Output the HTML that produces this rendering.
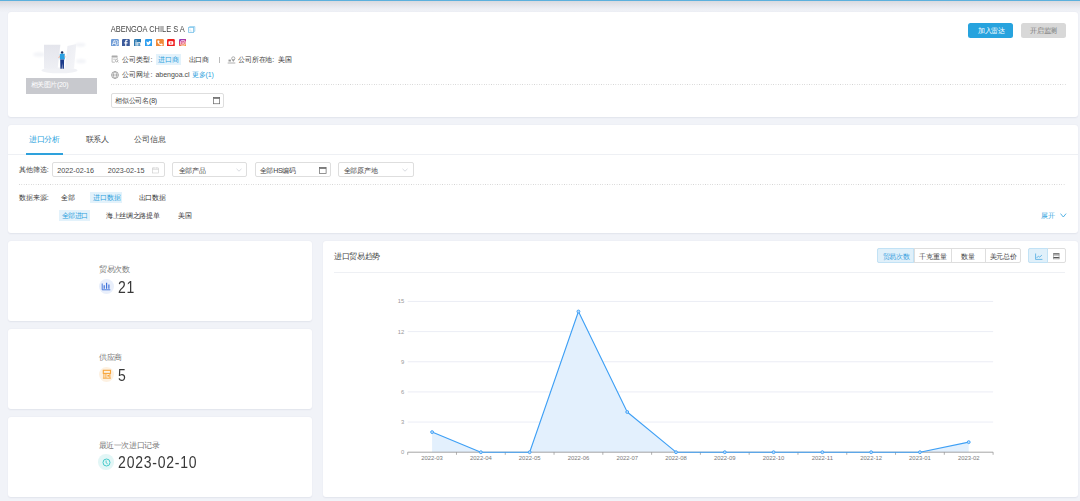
<!DOCTYPE html>
<html><head><meta charset="utf-8">
<style>
*{box-sizing:border-box;margin:0;padding:0}
html,body{width:1080px;height:501px;overflow:hidden;background:#f1f3f8;font-family:"Liberation Sans",sans-serif;color:#333}
.abs{position:absolute}
.t{position:absolute;white-space:nowrap;line-height:1}
.card{position:absolute;background:#fff;border-radius:3px;box-shadow:0 0.5px 1.5px rgba(30,40,80,.07)}
.tag{position:absolute;background:#e3f2fb}
.box{position:absolute;border:0.75px solid #dedede;border-radius:2px;background:#fff}
.dots{position:absolute;height:1px;background-image:linear-gradient(90deg,#d2d2d2 45%,transparent 45%);background-size:2.4px 1px}
</style></head><body>
<div class="abs" style="left:0;top:0;width:1080px;height:1px;background:#5cb0dd"></div>
<div class="abs" style="left:0;top:1px;width:1080px;height:11px;background:linear-gradient(#d9dae0,#eceef4 70%,#f0f2f7)"></div>
<div class="card" style="left:8px;top:12px;width:1069.5px;height:105px"></div>
<svg class="abs" style="left:20px;top:30px" width="90" height="50" viewBox="20 30 90 50">
  <defs>
    <linearGradient id="g1" x1="0" y1="0" x2="0" y2="1"><stop offset="0" stop-color="#e4e5ec"/><stop offset="1" stop-color="#eeeff4"/></linearGradient>
    <linearGradient id="g2" x1="0" y1="0" x2="1" y2="1"><stop offset="0" stop-color="#ebecf2"/><stop offset="1" stop-color="#f4f5f8"/></linearGradient>
    <filter id="bl" x="-50%" y="-50%" width="200%" height="200%"><feGaussianBlur stdDeviation="0.8"/></filter>
  </defs>
  <ellipse cx="59.5" cy="70.4" rx="18" ry="2.9" fill="#f0f1f5"/>
  <ellipse cx="39" cy="54.5" rx="6" ry="2.2" fill="#f3f4f8" filter="url(#bl)"/>
  <ellipse cx="80.5" cy="44.8" rx="5" ry="2" fill="#f3f4f8" filter="url(#bl)"/>
  <ellipse cx="81" cy="61.2" rx="5" ry="2.2" fill="#f3f4f8" filter="url(#bl)"/>
  <path d="M44 44.8H60.4L57.6 68.8H44Z" fill="url(#g1)"/>
  <path d="M67.5 46L76.3 44L74 68.8H64.8Z" fill="url(#g2)"/>
  <circle cx="62.1" cy="52.5" r="1.25" fill="#1c2b58"/>
  <path d="M59.8 53.8h5v5.8h-5z" fill="#2aa0e2"/>
  <path d="M60.2 59.5h3.9l-0.2 9.2h-1.4l-0.3-5.8-0.4 5.8h-1.4z" fill="#1b3a8a"/>
  <path d="M58 58.2l1.9-3.2v2.6z" fill="#f0b49c"/><path d="M65.8 57.6l-1.1-3v2.6z" fill="#f0b49c"/>
</svg>
<div class="abs" style="left:26.3px;top:77.9px;width:70.5px;height:15.9px;background:#c8c9ce"></div>
<div class="t" style="left:30.5px;top:81.2px;font-size:7px;letter-spacing:-0.35px;color:#fff;">相关图片(20)</div>
<div class="t" style="left:110.8px;top:25.3px;font-size:7.45px;color:#454545;transform:scaleY(1.12);transform-origin:0 0">ABENGOA CHILE S A</div>
<svg class="abs" style="left:187.8px;top:25.6px" width="8" height="7" viewBox="0 0 8 7"><path d="M1.6 1.2V0.6h5.2v4.8H6.1" fill="none" stroke="#86c8ec" stroke-width="0.8"/><rect x="0.6" y="1.4" width="5" height="5" fill="#fff" stroke="#7ec4ea" stroke-width="0.85"/><path d="M2 2.6v2.5h2.3" fill="none" stroke="#b5dcf3" stroke-width="0.6"/></svg>
<svg class="abs" style="left:110.9px;top:38.6px" width="7.8" height="7.8" viewBox="0 0 7.8 7.8"><rect width="7.8" height="7.8" rx="1.2" fill="#6e9bd6"/><path d="M1.3 6.2L3 1.6h.6l1.6 4.6M2 4.5h2.4" fill="none" stroke="#fff" stroke-width="0.75"/><path d="M4.6 1.6h1c.8 0 1.1.4 1.1 1 0 .5-.3.8-.8.9.6.1 1 .5 1 1.1 0 .8-.5 1.6-1.3 1.6h-1" fill="none" stroke="#fff" stroke-width="0.7"/></svg>
<svg class="abs" style="left:122.0px;top:38.6px" width="7.8" height="7.8" viewBox="0 0 7.8 7.8"><rect width="7.8" height="7.8" rx="1.2" fill="#3b5a9a"/><path d="M4.4 7.8V4.4h1.1l.2-1.2H4.4v-.8c0-.4.1-.6.6-.6h.7V.7H4.8c-1.2 0-1.6.6-1.6 1.6v.9H2.3v1.2h.9v3.4z" fill="#fff"/></svg>
<svg class="abs" style="left:133.5px;top:38.6px" width="7.8" height="7.8" viewBox="0 0 7.8 7.8"><rect width="7.8" height="7.8" rx="1.2" fill="#2b78b0"/><path d="M1.5 3h1.1v3.7H1.5zM2.05 1.3a.62.62 0 110 1.24.62.62 0 010-1.24zM3.3 3h1.05v.5c.2-.35.6-.6 1.2-.6 1.1 0 1.35.7 1.35 1.65v2.15H5.75V4.8c0-.5-.05-.95-.6-.95-.6 0-.75.4-.75.95v1.9H3.3z" fill="#fff"/></svg>
<svg class="abs" style="left:144.70000000000002px;top:38.6px" width="7.8" height="7.8" viewBox="0 0 7.8 7.8"><rect width="7.8" height="7.8" rx="1.2" fill="#2d9ff0"/><path d="M6.5 2.6c-.2.1-.4.1-.6.2.2-.1.4-.3.5-.6-.2.1-.4.2-.7.2a1 1 0 00-1.8.9C2.9 3.3 2.1 2.9 1.6 2.2c-.3.5-.1 1.1.3 1.4-.2 0-.3 0-.5-.1 0 .5.4.9.8 1h-.5c.1.4.5.7 1 .7-.5.4-1.1.6-1.7.5.5.3 1 .5 1.6.5 2 0 3.1-1.7 3.1-3.1v-.1c.3-.2.5-.4.7-.6z" fill="#fff"/></svg>
<svg class="abs" style="left:155.8px;top:38.6px" width="7.8" height="7.8" viewBox="0 0 7.8 7.8"><rect width="7.8" height="7.8" rx="1.2" fill="#f18a39"/><path d="M2.1 1.4h.9l.6 1.4-.7.6c.3.8.9 1.4 1.7 1.7l.6-.7 1.4.6v.9c0 .3-.3.6-.6.6C3.7 6.5 1.2 4 1.4 2c0-.3.3-.6.7-.6z" fill="#fff"/></svg>
<svg class="abs" style="left:167.3px;top:38.6px" width="7.8" height="7.8" viewBox="0 0 7.8 7.8"><rect width="7.8" height="7.8" rx="1.2" fill="#f01e1e"/><rect x="1.5" y="2.3" width="4.8" height="3.4" rx="0.6" fill="#fff"/><path d="M3.4 3.1l1.6 0.9-1.6 0.9z" fill="#f01e1e"/></svg>
<svg class="abs" style="left:178.5px;top:38.6px" width="7.8" height="7.8" viewBox="0 0 7.8 7.8"><defs><linearGradient id="ig" x1="0" y1="0" x2="0.3" y2="1"><stop offset="0" stop-color="#7a3fd0"/><stop offset="0.55" stop-color="#e2306c"/><stop offset="1" stop-color="#f9a03a"/></linearGradient></defs><rect width="7.8" height="7.8" rx="1.2" fill="url(#ig)"/><rect x="1.6" y="1.6" width="4.6" height="4.6" rx="1.3" fill="none" stroke="#fff" stroke-width="0.75"/><circle cx="3.9" cy="3.9" r="1.05" fill="none" stroke="#fff" stroke-width="0.7"/><circle cx="5.3" cy="2.5" r="0.35" fill="#fff"/></svg>
<svg class="abs" style="left:111px;top:55.3px" width="8" height="8" viewBox="0 0 8 8"><rect x="0.6" y="0.5" width="6" height="1.9" rx="0.4" fill="#aaa"/><path d="M1.1 2.6v4.6h2.8M6.2 2.6v1.4" fill="none" stroke="#aaa" stroke-width="0.75"/><path d="M2.2 4.2h2.4" stroke="#aaa" stroke-width="0.7"/><circle cx="5.6" cy="5.7" r="1.2" fill="none" stroke="#999" stroke-width="0.75"/><path d="M6.5 6.6l.8.8" stroke="#999" stroke-width="0.7"/></svg>
<div class="t" style="left:122.4px;top:56.0px;font-size:7px;color:#3c3c3c;">公司类型:</div>
<div class="tag" style="left:155.5px;top:54px;width:25.4px;height:11.1px"></div>
<div class="t" style="left:158.2px;top:56.0px;font-size:7px;letter-spacing:-0.2px;color:#2b9fdd;">进口商</div>
<div class="t" style="left:188.6px;top:56.0px;font-size:7px;letter-spacing:-0.45px;color:#3c3c3c;">出口商</div>
<div class="abs" style="left:218.5px;top:56.5px;width:1.1px;height:6px;background:#bbb"></div>
<svg class="abs" style="left:226.5px;top:55.5px" width="9" height="8" viewBox="0 0 9 8"><circle cx="6.3" cy="2.4" r="1.6" fill="none" stroke="#999" stroke-width="0.8"/><path d="M5.1 3.5L6.3 5.5 7.5 3.5" fill="#999" stroke="#999" stroke-width="0.5"/><rect x="1.5" y="3.6" width="2.4" height="1.9" fill="#999"/><path d="M0.7 7h7.6" stroke="#999" stroke-width="0.8"/></svg>
<div class="t" style="left:238.2px;top:56.0px;font-size:7px;letter-spacing:-0.2px;color:#3c3c3c;">公司所在地:</div>
<div class="t" style="left:277.8px;top:56.0px;font-size:7px;color:#333;">美国</div>
<svg class="abs" style="left:111px;top:71px" width="8" height="8" viewBox="0 0 8 8"><circle cx="4" cy="4" r="3.4" fill="none" stroke="#888" stroke-width="0.75"/><ellipse cx="4" cy="4" rx="1.5" ry="3.4" fill="none" stroke="#888" stroke-width="0.6"/><path d="M0.8 4h6.4" stroke="#888" stroke-width="0.6"/></svg>
<div class="t" style="left:122.4px;top:71.0px;font-size:7px;color:#3c3c3c;">公司网址:</div>
<div class="t" style="left:155.4px;top:71.0px;font-size:7.0px;color:#4a4a4a;">abengoa.cl</div>
<div class="t" style="left:191.8px;top:71.0px;font-size:7px;letter-spacing:-0.15px;color:#2b9fdd;">更多(1)</div>
<div class="dots" style="left:111px;top:84px;width:955px"></div>
<div class="box" style="left:111.4px;top:93.3px;width:112.2px;height:14.3px"></div>
<div class="t" style="left:115.0px;top:96.6px;font-size:7px;letter-spacing:-0.2px;color:#444;">相似公司名(8)</div>
<svg class="abs" style="left:213px;top:96.7px" width="8" height="8" viewBox="0 0 8 8"><rect x="0.45" y="0.45" width="6.2" height="6.3" fill="none" stroke="#666" stroke-width="0.7"/><rect x="0.45" y="0.45" width="6.2" height="1.3" fill="#666"/></svg>
<div class="abs" style="left:968.3px;top:23px;width:45px;height:15.3px;background:#27a3de;border-radius:2.5px"></div>
<div class="t" style="left:977.8px;top:27.0px;font-size:7px;letter-spacing:-0.25px;color:#fff;">加入雷达</div>
<div class="abs" style="left:1021.1px;top:23px;width:45px;height:15.3px;background:#d8d8d8;border-radius:2.5px"></div>
<div class="t" style="left:1030.1px;top:27.0px;font-size:7px;letter-spacing:-0.25px;color:#777;">开启监测</div>
<div class="card" style="left:8px;top:125px;width:1069.5px;height:108px"></div>
<div class="t" style="left:28.9px;top:136.2px;font-size:8px;letter-spacing:-0.2px;color:#2b9fdd;">进口分析</div>
<div class="t" style="left:85.6px;top:136.2px;font-size:8px;letter-spacing:-0.2px;color:#444;">联系人</div>
<div class="t" style="left:134.4px;top:136.2px;font-size:8px;letter-spacing:-0.2px;color:#444;">公司信息</div>
<div class="abs" style="left:8px;top:153.8px;width:1069.5px;height:0.8px;background:#eef0f4"></div>
<div class="abs" style="left:25.7px;top:153px;width:37.8px;height:2px;background:#2ea1dc"></div>
<div class="t" style="left:18.8px;top:166.0px;font-size:7px;color:#3c3c3c;">其他筛选:</div>
<div class="box" style="left:52.2px;top:162.3px;width:112.6px;height:15.2px"></div>
<div class="t" style="left:57.3px;top:166.7px;font-size:7.2px;color:#4a4a4a;">2022-02-16</div>
<div class="t" style="left:107.7px;top:166.7px;font-size:7.2px;color:#4a4a4a;">2023-02-15</div>
<svg class="abs" style="left:152.4px;top:166.6px" width="7" height="7" viewBox="0 0 7 7"><rect x="0.4" y="1" width="6" height="5" fill="none" stroke="#cbcbcb" stroke-width="0.6"/><path d="M0.4 2.4h6M1.9 0.2v1.4M4.9 0.2v1.4" stroke="#cbcbcb" stroke-width="0.6"/></svg>
<div class="box" style="left:172.3px;top:162.3px;width:75.2px;height:15.2px"></div>
<div class="t" style="left:178.7px;top:166.6px;font-size:7px;letter-spacing:-0.3px;color:#444;">全部产品</div>
<svg class="abs" style="left:236.2px;top:168px" width="6" height="4" viewBox="0 0 6 4"><path d="M0.5 0.8L3 3.2 5.5 0.8" fill="none" stroke="#c0c4cc" stroke-width="0.6"/></svg>
<div class="box" style="left:255.4px;top:162.3px;width:75.3px;height:15.2px"></div>
<div class="t" style="left:259.8px;top:166.6px;font-size:7px;letter-spacing:-0.3px;color:#444;">全部HS编码</div>
<svg class="abs" style="left:318.9px;top:166.6px" width="8" height="7" viewBox="0 0 8 7"><rect x="0.5" y="0.5" width="6.6" height="6" fill="none" stroke="#666" stroke-width="0.7"/><rect x="0.5" y="0.5" width="6.6" height="1.3" fill="#666"/></svg>
<div class="box" style="left:338.4px;top:162.3px;width:75.3px;height:15.2px"></div>
<div class="t" style="left:343.8px;top:166.6px;font-size:7px;letter-spacing:-0.3px;color:#444;">全部原产地</div>
<svg class="abs" style="left:401.6px;top:168px" width="6" height="4" viewBox="0 0 6 4"><path d="M0.5 0.8L3 3.2 5.5 0.8" fill="none" stroke="#c0c4cc" stroke-width="0.6"/></svg>
<div class="dots" style="left:18.8px;top:184px;width:1047px"></div>
<div class="t" style="left:18.8px;top:194.3px;font-size:7px;color:#3c3c3c;">数据来源:</div>
<div class="t" style="left:60.8px;top:194.3px;font-size:7px;color:#333;">全部</div>
<div class="tag" style="left:90.2px;top:192px;width:31.8px;height:10.6px"></div>
<div class="t" style="left:93.1px;top:194.3px;font-size:7px;letter-spacing:-0.15px;color:#2b9fdd;">进口数据</div>
<div class="t" style="left:138.6px;top:194.3px;font-size:7px;letter-spacing:-0.25px;color:#333;">出口数据</div>
<div class="tag" style="left:58.5px;top:210px;width:31.5px;height:10.6px"></div>
<div class="t" style="left:61.5px;top:212.4px;font-size:7px;letter-spacing:-0.35px;color:#2b9fdd;">全部进口</div>
<div class="t" style="left:106.2px;top:212.4px;font-size:7px;letter-spacing:-0.35px;color:#333;">海上丝绸之路提单</div>
<div class="t" style="left:178.1px;top:212.4px;font-size:7px;color:#333;">美国</div>
<div class="t" style="left:1041.2px;top:212.0px;font-size:7px;color:#2b9fdd;">展开</div>
<svg class="abs" style="left:1059.5px;top:212.8px" width="7" height="5" viewBox="0 0 7 5"><path d="M0.5 0.6L3.3 4 6.1 0.6" fill="none" stroke="#2b9fdd" stroke-width="0.8"/></svg>
<div class="card" style="left:8px;top:240.5px;width:304px;height:80px"></div>
<div class="card" style="left:8px;top:328.5px;width:304px;height:80px"></div>
<div class="card" style="left:8px;top:416.5px;width:304px;height:80px"></div>
<div class="t" style="left:98.8px;top:265.6px;font-size:8px;letter-spacing:-0.25px;color:#777;">贸易次数</div>
<div class="abs" style="left:98.5px;top:278.8px;width:15px;height:15px;border-radius:50%;background:#e9effb"></div>
<svg class="abs" style="left:101px;top:281.5px" width="10" height="9" viewBox="0 0 10 9"><path d="M1.2 1.5V7.8H9.3" fill="none" stroke="#3b6fd9" stroke-width="0.9"/><path d="M3.2 3.3v3.5M5.6 0.8v6M7.9 2.4v4.4" stroke="#3b6fd9" stroke-width="1.15"/></svg>
<div class="t" style="left:117.9px;top:279.0px;font-size:14px;letter-spacing:0.75px;color:#383838;transform:scaleY(1.13);transform-origin:0 0">21</div>
<div class="t" style="left:98.8px;top:354.4px;font-size:8px;letter-spacing:-0.25px;color:#777;">供应商</div>
<div class="abs" style="left:98.5px;top:366.5px;width:15px;height:15px;border-radius:50%;background:#fdf1e2"></div>
<svg class="abs" style="left:101.5px;top:369px" width="10" height="10" viewBox="0 0 10 10"><rect x="1.3" y="1.3" width="7.2" height="3.1" fill="none" stroke="#f7a53b" stroke-width="1.1"/><path d="M1.9 4.4V8.9M3.9 4.4V8.9M7.9 4.4V8.9M0.9 9.2H8.9" fill="none" stroke="#f7a53b" stroke-width="0.95"/><rect x="5.4" y="5.9" width="1.9" height="1.7" fill="#f7a53b"/></svg>
<div class="t" style="left:118.0px;top:367.0px;font-size:14px;color:#383838;transform:scaleY(1.13);transform-origin:0 0">5</div>
<div class="t" style="left:98.8px;top:441.6px;font-size:8px;letter-spacing:-0.45px;color:#777;">最近一次进口记录</div>
<div class="abs" style="left:98.3px;top:454.2px;width:15.5px;height:15.5px;border-radius:50%;background:#e2f6f6"></div>
<svg class="abs" style="left:101.6px;top:457.6px" width="9" height="9" viewBox="0 0 9 9"><circle cx="4.5" cy="4.5" r="3.5" fill="none" stroke="#3ec8c8" stroke-width="0.95"/><path d="M4.1 2.5v2.3l1.6 1.1" fill="none" stroke="#3ec8c8" stroke-width="0.9"/></svg>
<div class="t" style="left:118.1px;top:454.4px;font-size:14px;letter-spacing:0.75px;color:#383838;transform:scaleY(1.13);transform-origin:0 0">2023-02-10</div>
<div class="card" style="left:323px;top:240.5px;width:754.5px;height:256px"></div>
<div class="t" style="left:334.0px;top:253.0px;font-size:8px;letter-spacing:-0.35px;color:#444;">进口贸易趋势</div>
<div class="abs" style="left:333.9px;top:272px;width:731.6px;height:0.8px;background:#eef0f4"></div>
<div class="abs" style="left:877.4px;top:248.2px;width:143.4px;height:14.6px;border:0.75px solid #dedede;border-radius:2px;background:#fff"></div>
<div class="abs" style="left:877.4px;top:248.2px;width:36.8px;height:14.6px;border:0.75px solid #c2e2f5;border-radius:2px 0 0 2px;background:#e0f0fa"></div>
<div class="t" style="left:882.6px;top:253.2px;font-size:7px;letter-spacing:-0.25px;color:#3aa0de;">贸易次数</div>
<div class="abs" style="left:914.2px;top:248.2px;width:0.75px;height:14.6px;background:#dedede"></div>
<div class="t" style="left:919.25px;top:253.2px;font-size:7px;letter-spacing:-0.25px;color:#444;">千克重量</div>
<div class="abs" style="left:950.7px;top:248.2px;width:0.75px;height:14.6px;background:#dedede"></div>
<div class="t" style="left:961.3px;top:253.2px;font-size:7px;letter-spacing:-0.25px;color:#444;">数量</div>
<div class="abs" style="left:984.8px;top:248.2px;width:0.75px;height:14.6px;background:#dedede"></div>
<div class="t" style="left:989.6px;top:253.2px;font-size:7px;letter-spacing:-0.25px;color:#444;">美元总价</div>
<div class="abs" style="left:1028.4px;top:248.2px;width:37.3px;height:14.6px;border:0.75px solid #dedede;border-radius:2px;background:#fff"></div>
<div class="abs" style="left:1028.4px;top:248.2px;width:19.6px;height:14.6px;border:0.75px solid #c2e2f5;border-radius:2px 0 0 2px;background:#e0f0fa"></div>
<svg class="abs" style="left:1034.8px;top:253px" width="8" height="7" viewBox="0 0 8 7"><path d="M0.6 0.5v5.9h6.8" fill="none" stroke="#3aa0de" stroke-width="0.7"/><path d="M1.6 5l1.8-1.9 1.3 1 2.2-2" fill="none" stroke="#3aa0de" stroke-width="0.7"/></svg>
<svg class="abs" style="left:1053.2px;top:253px" width="7" height="7" viewBox="0 0 7 7"><path d="M0.2 0.9h6.2M0.2 4.6h6.2" stroke="#555" stroke-width="1.1"/><path d="M0.2 2.6h6.2M0.5 0.5v5.6M6.1 0.5v5.6M0.2 5.9h6.2" stroke="#888" stroke-width="0.55"/></svg>
<svg class="abs" style="left:323px;top:240px;font-family:'Liberation Sans',sans-serif" width="754" height="257" viewBox="323 240 754 257"><line x1="407.7" y1="422.05" x2="993.1" y2="422.05" stroke="#e6e9f2" stroke-width="0.8"/><line x1="407.7" y1="391.90" x2="993.1" y2="391.90" stroke="#e6e9f2" stroke-width="0.8"/><line x1="407.7" y1="361.75" x2="993.1" y2="361.75" stroke="#e6e9f2" stroke-width="0.8"/><line x1="407.7" y1="331.60" x2="993.1" y2="331.60" stroke="#e6e9f2" stroke-width="0.8"/><line x1="407.7" y1="301.45" x2="993.1" y2="301.45" stroke="#e6e9f2" stroke-width="0.8"/><text x="404.2" y="454.20" font-size="5.8" fill="#999" text-anchor="end">0</text><text x="404.2" y="424.05" font-size="5.8" fill="#999" text-anchor="end">3</text><text x="404.2" y="393.90" font-size="5.8" fill="#999" text-anchor="end">6</text><text x="404.2" y="363.75" font-size="5.8" fill="#999" text-anchor="end">9</text><text x="404.2" y="333.60" font-size="5.8" fill="#999" text-anchor="end">12</text><text x="404.2" y="303.45" font-size="5.8" fill="#999" text-anchor="end">15</text><path d="M432.09 452.20 L432.09 432.10 L480.88 452.20 L529.66 452.20 L578.44 311.50 L627.23 412.00 L676.01 452.20 L724.79 452.20 L773.58 452.20 L822.36 452.20 L871.14 452.20 L919.92 452.20 L968.71 442.15 L968.71 452.20 Z" fill="#e3f0fd"/><line x1="407.7" y1="452.2" x2="993.1" y2="452.2" stroke="#8e8e8e" stroke-width="0.8"/><line x1="407.70" y1="452.2" x2="407.70" y2="454.80" stroke="#8e8e8e" stroke-width="0.7"/><line x1="456.48" y1="452.2" x2="456.48" y2="454.80" stroke="#8e8e8e" stroke-width="0.7"/><line x1="505.27" y1="452.2" x2="505.27" y2="454.80" stroke="#8e8e8e" stroke-width="0.7"/><line x1="554.05" y1="452.2" x2="554.05" y2="454.80" stroke="#8e8e8e" stroke-width="0.7"/><line x1="602.83" y1="452.2" x2="602.83" y2="454.80" stroke="#8e8e8e" stroke-width="0.7"/><line x1="651.62" y1="452.2" x2="651.62" y2="454.80" stroke="#8e8e8e" stroke-width="0.7"/><line x1="700.40" y1="452.2" x2="700.40" y2="454.80" stroke="#8e8e8e" stroke-width="0.7"/><line x1="749.18" y1="452.2" x2="749.18" y2="454.80" stroke="#8e8e8e" stroke-width="0.7"/><line x1="797.97" y1="452.2" x2="797.97" y2="454.80" stroke="#8e8e8e" stroke-width="0.7"/><line x1="846.75" y1="452.2" x2="846.75" y2="454.80" stroke="#8e8e8e" stroke-width="0.7"/><line x1="895.53" y1="452.2" x2="895.53" y2="454.80" stroke="#8e8e8e" stroke-width="0.7"/><line x1="944.32" y1="452.2" x2="944.32" y2="454.80" stroke="#8e8e8e" stroke-width="0.7"/><line x1="993.10" y1="452.2" x2="993.10" y2="454.80" stroke="#8e8e8e" stroke-width="0.7"/><path d="M432.09 432.10 L480.88 452.20 L529.66 452.20 L578.44 311.50 L627.23 412.00 L676.01 452.20 L724.79 452.20 L773.58 452.20 L822.36 452.20 L871.14 452.20 L919.92 452.20 L968.71 442.15" fill="none" stroke="#3d9ff5" stroke-width="1.1" stroke-linejoin="round"/><circle cx="432.09" cy="432.10" r="1.45" fill="#b9dafc" stroke="#3d9ff5" stroke-width="0.9"/><circle cx="480.88" cy="452.20" r="1.45" fill="#b9dafc" stroke="#3d9ff5" stroke-width="0.9"/><circle cx="529.66" cy="452.20" r="1.45" fill="#b9dafc" stroke="#3d9ff5" stroke-width="0.9"/><circle cx="578.44" cy="311.50" r="1.45" fill="#b9dafc" stroke="#3d9ff5" stroke-width="0.9"/><circle cx="627.23" cy="412.00" r="1.45" fill="#b9dafc" stroke="#3d9ff5" stroke-width="0.9"/><circle cx="676.01" cy="452.20" r="1.45" fill="#b9dafc" stroke="#3d9ff5" stroke-width="0.9"/><circle cx="724.79" cy="452.20" r="1.45" fill="#b9dafc" stroke="#3d9ff5" stroke-width="0.9"/><circle cx="773.58" cy="452.20" r="1.45" fill="#b9dafc" stroke="#3d9ff5" stroke-width="0.9"/><circle cx="822.36" cy="452.20" r="1.45" fill="#b9dafc" stroke="#3d9ff5" stroke-width="0.9"/><circle cx="871.14" cy="452.20" r="1.45" fill="#b9dafc" stroke="#3d9ff5" stroke-width="0.9"/><circle cx="919.92" cy="452.20" r="1.45" fill="#b9dafc" stroke="#3d9ff5" stroke-width="0.9"/><circle cx="968.71" cy="442.15" r="1.45" fill="#b9dafc" stroke="#3d9ff5" stroke-width="0.9"/><text x="432.09" y="460.0" font-size="5.9" fill="#7a7a7a" text-anchor="middle">2022-03</text><text x="480.88" y="460.0" font-size="5.9" fill="#7a7a7a" text-anchor="middle">2022-04</text><text x="529.66" y="460.0" font-size="5.9" fill="#7a7a7a" text-anchor="middle">2022-05</text><text x="578.44" y="460.0" font-size="5.9" fill="#7a7a7a" text-anchor="middle">2022-06</text><text x="627.23" y="460.0" font-size="5.9" fill="#7a7a7a" text-anchor="middle">2022-07</text><text x="676.01" y="460.0" font-size="5.9" fill="#7a7a7a" text-anchor="middle">2022-08</text><text x="724.79" y="460.0" font-size="5.9" fill="#7a7a7a" text-anchor="middle">2022-09</text><text x="773.58" y="460.0" font-size="5.9" fill="#7a7a7a" text-anchor="middle">2022-10</text><text x="822.36" y="460.0" font-size="5.9" fill="#7a7a7a" text-anchor="middle">2022-11</text><text x="871.14" y="460.0" font-size="5.9" fill="#7a7a7a" text-anchor="middle">2022-12</text><text x="919.92" y="460.0" font-size="5.9" fill="#7a7a7a" text-anchor="middle">2023-01</text><text x="968.71" y="460.0" font-size="5.9" fill="#7a7a7a" text-anchor="middle">2023-02</text></svg>
</body></html>
